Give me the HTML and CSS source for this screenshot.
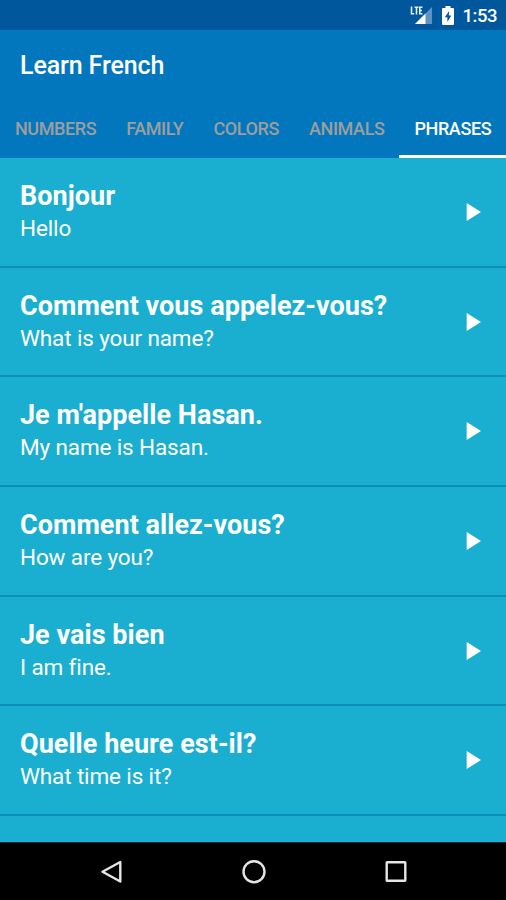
FILE: index.html
```html
<!DOCTYPE html>
<html lang="en">

<head>
	<title>Learn French</title>
	<meta charset="utf-8">
	<meta name="viewport" content="width=device-width, initial-scale=1">
	<link rel="stylesheet" href="styles.css">
</head>

<body>
	<div class="status-bar">
		<svg class="signal" width="24" height="20" viewBox="0 0 24 20">
			<path d="M22 1V18H5z" fill="#5f91c4"/>
			<path d="M15.500 7.500V18H5z" fill="#fff"/>
			<path d="M1.500 .5V7.800H4.200M4.500 1.300H8.500M6.500 1.300V8.500M12.500 1.300H9.800V7.800H12.500M9.800 4.500H12" fill="none" stroke="#e4efff" stroke-width="1.600"/>
		</svg>
		<svg class="battery" width="12" height="19" viewBox="0 0 12 19">
			<path d="M3.500 0h5v2H11q1 0 1 1v15q0 1-1 1H1q-1 0-1-1V3q0-1 1-1h2.500z" fill="#fff"/>
			<path d="M7.200 5L2.800 11.300H5.400V16L9.300 9.500H6.800z" fill="#01579b"/>
		</svg>
		<span class="clock">1:53</span>
	</div>

	<header class="app-bar">
		<h1>Learn French</h1>
		<nav class="tabs">
			<a class="tab">NUMBERS</a>
			<a class="tab">FAMILY</a>
			<a class="tab">COLORS</a>
			<a class="tab">ANIMALS</a>
			<a class="tab active">PHRASES</a>
		</nav>
	</header>

	<main class="list">
		<div class="row">
			<div class="words"><h2>Bonjour</h2><p>Hello</p></div>
			<svg class="play" width="15" height="18" viewBox="0 0 15 18"><path d="M.7 0L15 9L.7 18z"/></svg>
		</div>
		<div class="row">
			<div class="words"><h2>Comment vous appelez-vous?</h2><p>What is your name?</p></div>
			<svg class="play" width="15" height="18" viewBox="0 0 15 18"><path d="M.7 0L15 9L.7 18z"/></svg>
		</div>
		<div class="row">
			<div class="words"><h2>Je m'appelle Hasan.</h2><p>My name is Hasan.</p></div>
			<svg class="play" width="15" height="18" viewBox="0 0 15 18"><path d="M.7 0L15 9L.7 18z"/></svg>
		</div>
		<div class="row">
			<div class="words"><h2>Comment allez-vous?</h2><p>How are you?</p></div>
			<svg class="play" width="15" height="18" viewBox="0 0 15 18"><path d="M.7 0L15 9L.7 18z"/></svg>
		</div>
		<div class="row">
			<div class="words"><h2>Je vais bien</h2><p>I am fine.</p></div>
			<svg class="play" width="15" height="18" viewBox="0 0 15 18"><path d="M.7 0L15 9L.7 18z"/></svg>
		</div>
		<div class="row">
			<div class="words"><h2>Quelle heure est-il?</h2><p>What time is it?</p></div>
			<svg class="play" width="15" height="18" viewBox="0 0 15 18"><path d="M.7 0L15 9L.7 18z"/></svg>
		</div>
	</main>

	<footer class="nav-bar">
		<svg width="24" height="24" viewBox="0 0 24 24"><path d="M20.300 2V21.500L2.500 11.700z"/></svg>
		<svg width="24" height="24" viewBox="0 0 24 24"><circle cx="12" cy="11.700" r="10.500"/></svg>
		<svg width="24" height="24" viewBox="0 0 24 24"><rect x="2.700" y="2.200" width="18.600" height="18.600" rx=".5"/></svg>
	</footer>
</body>
</html>
```
FILE: styles.css
```css
* {
	margin: 0;
	box-sizing: border-box;
}

body {
	display: flex;
	flex-direction: column;
	height: 100vh;
	overflow: hidden;
	font-family: Roboto, sans-serif;
	color: white;
	background: #1aafd0;
}

.status-bar {
	display: flex;
	flex: none;
	justify-content: flex-end;
	height: 30px;
	padding-right: 9px;
	background: #01579b;
}

.signal {
	margin-top: 6px;
}

.battery {
	margin: 6px 9px 0 8px;
}

.clock {
	font-size: 18.500px;
	font-weight: 500;
	letter-spacing: -0.5px;
	line-height: 32px;
}

.app-bar {
	flex: none;
	height: 128px;
	background: #0277bd;
}

h1 {
	height: 71px;
	padding-left: 20px;
	font-size: 25px;
	font-weight: 500;
	letter-spacing: -0.12px;
	line-height: 71px;
}

.tabs {
	display: flex;
	height: 57px;
}

.tab {
	flex: none;
	padding: 0 15px;
	font-size: 18px;
	font-weight: 500;
	letter-spacing: -0.4px;
	line-height: 56px;
	color: #9e9e9e;
}

.active {
	color: white;
	border-bottom: 3px solid white;
}

.list {
	flex: 1;
	min-height: 0;
	overflow: hidden;
}

.row {
	display: flex;
	justify-content: space-between;
	height: 109.7px;
	padding: 21px 25px 0 20px;
	border-bottom: 2px solid #0d8dbb;
}

h2 {
	font-size: 27px;
	font-weight: 700;
	letter-spacing: 0.04px;
	line-height: 34px;
}

p {
	font-size: 22.500px;
	letter-spacing: -0.13px;
	line-height: 31px;
}

.play {
	margin-top: 24px;
	fill: white;
}

.nav-bar {
	display: flex;
	flex: none;
	justify-content: center;
	gap: 118px;
	height: 58px;
	padding: 17px 0 0 2px;
	border-top: 1px solid #07303a;
	background: black;
}

.nav-bar svg {
	fill: none;
	stroke: #e6e6e6;
	stroke-width: 2.400;
	stroke-linejoin: round;
}
```
